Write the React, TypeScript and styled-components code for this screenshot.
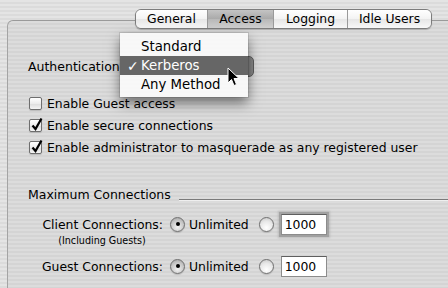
import { ReactElement } from 'react';
import styled, { createGlobalStyle } from 'styled-components';

const GlobalStyle = createGlobalStyle`
  html, body {
    margin: 0;
    padding: 0;
  }
  body {
    width: 448px;
    height: 288px;
    overflow: hidden;
    font-family: "DejaVu Sans", "Liberation Sans", sans-serif;
    color: #000;
  }
`;

const Window = styled.div`
  position: relative;
  width: 448px;
  height: 288px;
  overflow: hidden;
  box-sizing: border-box;
  padding: 9px 0 0 7px;
  background: repeating-linear-gradient(to bottom, #e4e4e4 0 2px, #dbdbdb 2px 4px);
`;

const TabBar = styled.div`
  position: relative;
  z-index: 2;
  display: flex;
  width: 295px;
  height: 18px;
  margin-left: 128px;
  margin-bottom: -9px;
  border: 1px solid #7c7c7c;
  border-radius: 6px;
  overflow: hidden;
  box-shadow: 0 1px 1px rgba(0, 0, 0, 0.22);
`;

const Tab = styled.div<{ $w: number; $active?: boolean }>`
  flex: none;
  width: ${(p) => p.$w}px;
  display: flex;
  align-items: center;
  justify-content: center;
  font-size: 12.4px;
  line-height: 18px;
  box-sizing: border-box;
  & + & {
    border-left: 1px solid #9a9a9a;
  }
  background: ${(p) =>
    p.$active
      ? 'linear-gradient(to bottom, #c4c4c4 0%, #a9a9a9 50%, #b8b8b8 51%, #d0d0d0 100%)'
      : 'linear-gradient(to bottom, #ffffff 0%, #f3f3f3 50%, #e6e6e6 51%, #f8f8f8 100%)'};
`;

const Panel = styled.div`
  height: 300px;
  box-sizing: border-box;
  border-top: 1px solid #9a9a9a;
  border-left: 1px solid #a4a4a4;
  border-top-left-radius: 6px;
  padding: 35px 0 0 20px;
  background: repeating-linear-gradient(to bottom, #dcdcdc 0 2px, #d4d4d4 2px 4px);
`;

const AuthRow = styled.div`
  display: flex;
  align-items: center;
  height: 21px;
  font-size: 12.5px;
`;

const PopupWrap = styled.div`
  position: relative;
  margin-left: 4px;
`;

const PopupButton = styled.div`
  width: 126px;
  height: 21px;
  box-sizing: border-box;
  border: 1px solid #5c5c5c;
  border-radius: 5px;
  background: linear-gradient(to right, #f2f2f2 0, #f2f2f2 108px, #6e6e6e 108px, #8a8a8a 100%);
`;

const Menu = styled.div`
  position: absolute;
  z-index: 3;
  left: -8px;
  top: -23px;
  width: 128px;
  padding: 4px 0 3px;
  background: rgba(248, 248, 248, 0.98);
  box-shadow: 0 6px 12px rgba(0, 0, 0, 0.5), 0 0 0 1px rgba(0, 0, 0, 0.1);
`;

const MenuItem = styled.div<{ $hi?: boolean }>`
  display: flex;
  align-items: center;
  height: 19px;
  padding-left: 7px;
  font-size: 13.3px;
  color: ${(p) => (p.$hi ? '#fff' : '#000')};
  background: ${(p) => (p.$hi ? '#666666' : 'transparent')};
`;

const Check = styled.span`
  display: inline-block;
  width: 14px;
  font-size: 14px;
  font-weight: bold;
`;

const Options = styled.div`
  margin-top: 15px;
`;

const CheckRow = styled.label`
  display: flex;
  align-items: center;
  height: 22px;
  font-size: 12.4px;
  padding-left: 1px;
`;

const Box = styled.span`
  position: relative;
  flex: none;
  width: 13px;
  height: 13px;
  margin-right: 5px;
  box-sizing: border-box;
  border: 1px solid #6e6e6e;
  border-radius: 2px;
  background: linear-gradient(to bottom, #ffffff 0%, #ececec 50%, #dedede 55%, #f4f4f4 100%);
  box-shadow: 0 1px 1px rgba(0, 0, 0, 0.15);
  svg {
    position: absolute;
    left: 0px;
    top: -3px;
  }
`;

const SectionHead = styled.div`
  display: flex;
  align-items: center;
  height: 16px;
  margin-top: 28px;
  font-size: 12.5px;
`;

const Rule = styled.div`
  flex: 1;
  height: 1px;
  margin: 10px 0 0 8px;
  background: #7a7a7a;
  box-shadow: 0 1px 0 #efefef;
`;

const FieldRow = styled.div<{ $top: number }>`
  display: flex;
  align-items: center;
  height: 22px;
  margin-top: ${(p) => p.$top}px;
  font-size: 12.4px;
`;

const FieldLabel = styled.div`
  width: 122px;
  margin-left: 13px;
  text-align: right;
  white-space: nowrap;
`;

const SubLabel = styled.div`
  width: 122px;
  margin-left: 13px;
  height: 11px;
  line-height: 11px;
  text-align: center;
  font-size: 9.6px;
`;

const Radio = styled.span<{ $on?: boolean; $gap: number }>`
  position: relative;
  flex: none;
  width: 15px;
  height: 15px;
  margin: 0 4px 0 ${(p) => p.$gap}px;
  box-sizing: border-box;
  border: 1px solid #707070;
  border-radius: 50%;
  background: ${(p) =>
    p.$on
      ? 'radial-gradient(circle at 50% 70%, #f2f2f2 0%, #c4c4c4 60%, #9c9c9c 100%)'
      : 'radial-gradient(circle at 50% 75%, #ffffff 0%, #e8e8e8 55%, #c2c2c2 100%)'};
  box-shadow: 0 1px 1px rgba(0, 0, 0, 0.15);
  &::after {
    content: '';
    display: ${(p) => (p.$on ? 'block' : 'none')};
    position: absolute;
    left: 4.5px;
    top: 4.5px;
    width: 4px;
    height: 4px;
    border-radius: 50%;
    background: #000;
  }
`;

const Field = styled.div<{ $focus?: boolean }>`
  flex: none;
  width: 46px;
  height: 21px;
  margin-left: 3px;
  box-sizing: border-box;
  padding: 0 0 0 3px;
  line-height: 19px;
  background: #fff;
  border: 1px solid #8c8c8c;
  border-top-color: #5e5e5e;
  box-shadow: ${(p) =>
    p.$focus ? '0 0 0 2px rgba(140,140,140,0.55), 0 0 2px 3px rgba(160,160,160,0.5)' : 'none'};
`;

const Cursor = styled.svg`
  position: absolute;
  left: 227px;
  top: 67px;
  z-index: 5;
`;

const CheckMark = (): ReactElement => (
  <svg width="14" height="15" viewBox="0 0 14 15">
    <path d="M2.5 8.5 L5.5 12 L11.5 1.5" fill="none" stroke="#000" strokeWidth="2.2" strokeLinejoin="miter" />
  </svg>
);

const Option = ({ label, checked }: { label: string; checked?: boolean }): ReactElement => (
  <CheckRow>
    <Box>{checked ? <CheckMark /> : null}</Box>
    {label}
  </CheckRow>
);

const App = (): ReactElement => {
  return (
    <Window>
      <GlobalStyle />
      <TabBar>
        <Tab $w={71}>General</Tab>
        <Tab $w={66} $active>
          Access
        </Tab>
        <Tab $w={74}>Logging</Tab>
        <Tab $w={84}>Idle Users</Tab>
      </TabBar>
      <Panel>
        <AuthRow>
          Authentication:
          <PopupWrap>
            <PopupButton />
            <Menu>
              <MenuItem>
                <Check />
                Standard
              </MenuItem>
              <MenuItem $hi>
                <Check>✓</Check>
                Kerberos
              </MenuItem>
              <MenuItem>
                <Check />
                Any Method
              </MenuItem>
            </Menu>
          </PopupWrap>
        </AuthRow>
        <Options>
          <Option label="Enable Guest access" />
          <Option label="Enable secure connections" checked />
          <Option label="Enable administrator to masquerade as any registered user" checked />
        </Options>
        <SectionHead>
          Maximum Connections
          <Rule />
        </SectionHead>
        <FieldRow $top={11}>
          <FieldLabel>Client Connections:</FieldLabel>
          <Radio $on $gap={7} />
          Unlimited
          <Radio $gap={10} />
          <Field $focus>1000</Field>
        </FieldRow>
        <SubLabel>(Including Guests)</SubLabel>
        <FieldRow $top={9}>
          <FieldLabel>Guest Connections:</FieldLabel>
          <Radio $on $gap={7} />
          Unlimited
          <Radio $gap={10} />
          <Field>1000</Field>
        </FieldRow>
      </Panel>
      <Cursor width="13" height="20" viewBox="0 0 13 20">
        <path d="M1 1 L1 16 L4.5 12.5 L7 18.5 L9.5 17.5 L7 11.5 L12 11.5 Z" fill="#000" stroke="#fff" strokeWidth="1" />
      </Cursor>
    </Window>
  );
};

export default App;
